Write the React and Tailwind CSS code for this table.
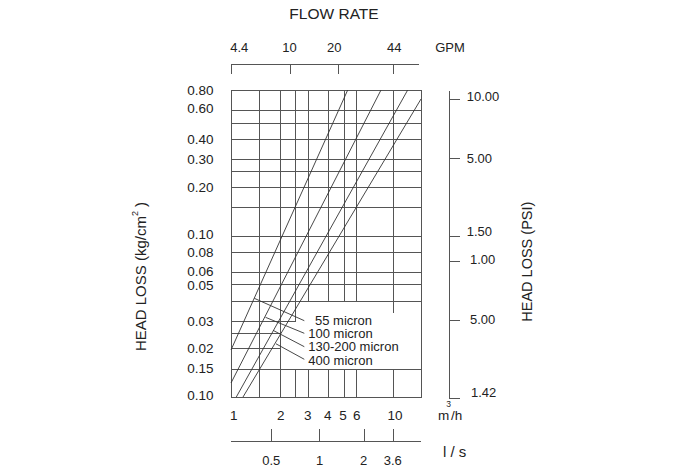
import React from "react";

const F = "'Liberation Sans', Arial, sans-serif";
const G = "#555";
const T = "#222";

function Chart() {
  const L = 231, R = 421, TOP = 90, BOT = 397;
  const fullH = [90, 110, 123, 139, 159, 171, 187, 207, 236, 252, 272, 284, 301, 369, 397];
  const partH = [
    [321, 231, 295],
    [333, 231, 280],
    [348, 231, 280],
  ];
  const verts = [
    [231, [[TOP, BOT]]],
    [259, [[TOP, BOT]]],
    [280, [[TOP, BOT]]],
    [295, [[TOP, 321], [369, BOT]]],
    [308, [[TOP, 301], [369, BOT]]],
    [328, [[TOP, 301], [369, BOT]]],
    [344, [[TOP, 301], [369, BOT]]],
    [356, [[TOP, 301], [369, BOT]]],
    [393, [[TOP, 312], [369, BOT]]],
    [421, [[TOP, BOT]]],
  ];
  const curves = [
    [347.7, 90, 231, 350],
    [381, 90, 231, 383],
    [407.7, 90, 236.3, 397],
    [421, 99, 243, 397],
  ];
  const leaders = [
    [254.3, 298.3, 304.3, 320.7],
    [265.5, 317.3, 304.3, 333.3],
    [273, 330.3, 304.3, 346.7],
    [276, 343.8, 304.3, 359.3],
  ];
  const leftLabels = [
    ["0.80", 90], ["0.60", 108.5], ["0.40", 139.3], ["0.30", 159], ["0.20", 187.3],
    ["0.10", 234.5], ["0.08", 252.3], ["0.06", 270.7], ["0.05", 285.5], ["0.03", 320.7],
    ["0.02", 348.3], ["0.15", 368.5], ["0.10", 395.5],
  ];
  const psiTicks = [99, 158, 236, 261, 320, 397.5];
  const psiLabels = [
    ["10.00", 466.7, 96.7], ["5.00", 466.7, 158.3], ["1.50", 466.7, 231.7],
    ["1.00", 470, 259], ["5.00", 470, 319.3], ["1.42", 471, 392.7],
  ];
  const m3 = [["1", 233.8], ["2", 280.8], ["3", 307.8], ["4", 327.8], ["5", 343], ["6", 356.8], ["10", 395]];
  const ls = [["0.5", 271.3], ["1", 319.5], ["2", 363.7], ["3.6", 392.8]];
  const gpm = [["4.4", 239.3], ["10", 289.5], ["20", 334.2], ["44", 394.2]];
  const p = (v) => Math.round(v) + 0.5;

  return (
    <svg width="700" height="466" viewBox="0 0 700 466" fontFamily={F}>
      <g stroke={G} strokeWidth="1" fill="none" shapeRendering="crispEdges">
        {fullH.map((y) => (
          <line key={"h" + y} x1={L} x2={R + 1} y1={p(y)} y2={p(y)} />
        ))}
        {partH.map(([y, a, b]) => (
          <line key={"ph" + y} x1={a} x2={b + 1} y1={p(y)} y2={p(y)} />
        ))}
        {verts.map(([x, segs]) =>
          segs.map(([a, b], i) => (
            <line key={"v" + x + "-" + i} x1={p(x)} x2={p(x)} y1={a} y2={b + 1} />
          ))
        )}
      </g>
      <g stroke="#333" strokeWidth="0.9" fill="none">
        {curves.map(([a, b, c, d], i) => (
          <line key={"c" + i} x1={a} y1={b} x2={c} y2={d} />
        ))}
        {leaders.map(([a, b, c, d], i) => (
          <line key={"l" + i} x1={a} y1={b} x2={c} y2={d} />
        ))}
      </g>
      <g fill={T} fontSize="13">
        <text x="315" y="324.6">55 micron</text>
        <text x="308.3" y="338">100 micron</text>
        <text x="308.3" y="351.4">130-200 micron</text>
        <text x="308.3" y="364.6">400 micron</text>
      </g>
      <g fill={T} fontSize="13.5" textAnchor="end">
        {leftLabels.map(([t, y], i) => (
          <text key={"ll" + i} x="213.5" y={y + 4.8}>{t}</text>
        ))}
      </g>
      <text
        fill={T}
        fontSize="15"
        textAnchor="middle"
        transform="translate(146 276.5) rotate(-90)"
      >
        HEAD LOSS (kg/cm<tspan fontSize="9" dy="-8">2</tspan>
        <tspan dy="8"> )</tspan>
      </text>
      <text fill={T} fontSize="15.5" textAnchor="middle" x="334" y="18.8">FLOW RATE</text>
      <g stroke={G} strokeWidth="1" shapeRendering="crispEdges">
        <line x1="231" x2="419" y1="64.5" y2="64.5" />
        {[231, 290, 338, 393].map((x) => (
          <line key={"gt" + x} x1={x + 0.5} x2={x + 0.5} y1="64" y2="73.5" />
        ))}
      </g>
      <g fill={T} fontSize="13" textAnchor="middle">
        {gpm.map(([t, x]) => (
          <text key={"g" + t} x={x} y="51.8">{t}</text>
        ))}
        <text x="450" y="51.8">GPM</text>
      </g>
      <g stroke={G} strokeWidth="1" shapeRendering="crispEdges">
        <line x1="449.5" x2="449.5" y1="90.5" y2="398" />
        {psiTicks.map((y) => (
          <line key={"pt" + y} x1="449" x2="459.5" y1={p(y)} y2={p(y)} />
        ))}
      </g>
      <g fill={T} fontSize="13">
        {psiLabels.map(([t, x, y], i) => (
          <text key={"pl" + i} x={x} y={y + 4.7}>{t}</text>
        ))}
      </g>
      <text
        fill={T}
        fontSize="14.5"
        textAnchor="middle"
        transform="translate(532 261.7) rotate(-90)"
      >
        HEAD LOSS (PSI)
      </text>
      <g fill={T} fontSize="13.5" textAnchor="middle">
        {m3.map(([t, x]) => (
          <text key={"m" + t} x={x} y="419.8">{t}</text>
        ))}
      </g>
      <text fill={T} fontSize="13.5" x="438" y="419.8">m</text>
      <text fill={T} fontSize="8.5" x="446.2" y="407">3</text>
      <text fill={T} fontSize="13.5" x="451" y="419.8">/h</text>
      <g stroke={G} strokeWidth="1" shapeRendering="crispEdges">
        <line x1="231" x2="421" y1="441.5" y2="441.5" />
        {[271, 319, 364, 393].map((x) => (
          <line key={"lt" + x} x1={x + 0.5} x2={x + 0.5} y1="429" y2="441.5" />
        ))}
      </g>
      <g fill={T} fontSize="13" textAnchor="middle">
        {ls.map(([t, x]) => (
          <text key={"s" + t} x={x} y="465">{t}</text>
        ))}
      </g>
      <text fill={T} fontSize="15" x="443" y="457.3">l / s</text>
    </svg>
  );
}

export default function App() {
  return (
    <div className="w-[700px] h-[466px] bg-white overflow-hidden">
      <Chart />
    </div>
  );
}
